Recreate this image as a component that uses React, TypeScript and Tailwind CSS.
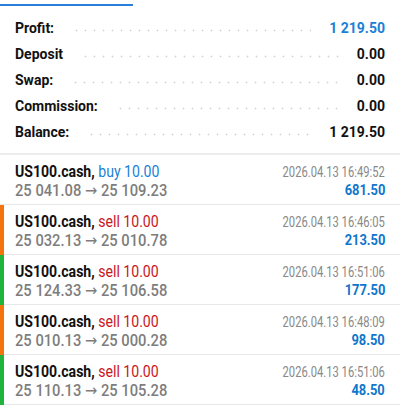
import React from 'react';

const SUMMARY = [
  { label: 'Profit:', value: '1 219.50', blue: true },
  { label: 'Deposit', value: '0.00' },
  { label: 'Swap:', value: '0.00' },
  { label: 'Commission:', value: '0.00' },
  { label: 'Balance:', value: '1 219.50' },
];

const TRADES = [
  { side: 'buy', open: '25 041.08', close: '25 109.23', time: '2026.04.13 16:49:52', profit: '681.50', bar: '' },
  { side: 'sell', open: '25 032.13', close: '25 010.78', time: '2026.04.13 16:46:05', profit: '213.50', bar: 'bg-[#f5730e]' },
  { side: 'sell', open: '25 124.33', close: '25 106.58', time: '2026.04.13 16:51:06', profit: '177.50', bar: 'bg-[#1fb53d]' },
  { side: 'sell', open: '25 010.13', close: '25 000.28', time: '2026.04.13 16:48:09', profit: '98.50', bar: 'bg-[#f5730e]' },
  { side: 'sell', open: '25 110.13', close: '25 105.28', time: '2026.04.13 16:51:06', profit: '48.50', bar: 'bg-[#1fb53d]' },
];

const App: React.FC = () => {
  return (
    <div className="w-[400px] h-[413px] bg-white overflow-hidden font-['Roboto',sans-serif]">
      {/* Tab indicator */}
      <div className="pt-[4px]">
        <div className="w-[133px] h-[2px] bg-[#2a7fd8]" />
      </div>

      {/* Summary */}
      <div className="pt-[9px] pb-[8px] px-[15px]">
        {SUMMARY.map((row) => (
          <div key={row.label} className="h-[26px] flex items-center text-[14px] font-bold">
            <span className="text-[#111]">{row.label}</span>
            <div className="flex-1 mx-[18px] mt-[5px] h-[3px] bg-[radial-gradient(circle,#d2d2d2_0.8px,transparent_1.1px)] bg-[length:9px_3px] bg-repeat-x" />
            <span className={row.blue ? 'text-[#1c7fd6]' : 'text-[#111]'}>{row.value}</span>
          </div>
        ))}
      </div>
      <div className="h-[2px] bg-[#ececec]" />

      {/* Trades */}
      {TRADES.map((t, i) => (
        <div key={i} className="relative h-[50px] border-b border-[#e8e8e8] flex justify-between pl-[15px] pr-[15px]">
          {t.bar && <div className={`absolute left-0 top-0 bottom-[-1px] w-[4px] ${t.bar}`} />}
          <div className="pt-[7px] leading-[19px] flex flex-col items-start whitespace-nowrap">
            <span className="text-[16px] inline-block origin-left scale-x-[0.88]">
              <span className="font-bold text-[#111]">US100.cash, </span>
              <span className={t.side === 'buy' ? 'text-[#1c7fd6]' : 'text-[#c8161e]'}>
                {t.side} 10.00
              </span>
            </span>
            <span className="text-[16px] font-medium text-[#7d7d7d] inline-block origin-left scale-x-[0.92]">
              {t.open} <span className="font-['DejaVu_Sans',sans-serif] font-normal">→</span> {t.close}
            </span>
          </div>
          <div className="pt-[8px] flex flex-col items-end leading-[18px] whitespace-nowrap">
            <span className="text-[14px] text-[#888] inline-block origin-right scale-x-[0.8]">{t.time}</span>
            <span className="text-[15px] font-bold text-[#0f76cc] inline-block origin-right scale-x-[0.86]">{t.profit}</span>
          </div>
        </div>
      ))}
    </div>
  );
};

export default App;
